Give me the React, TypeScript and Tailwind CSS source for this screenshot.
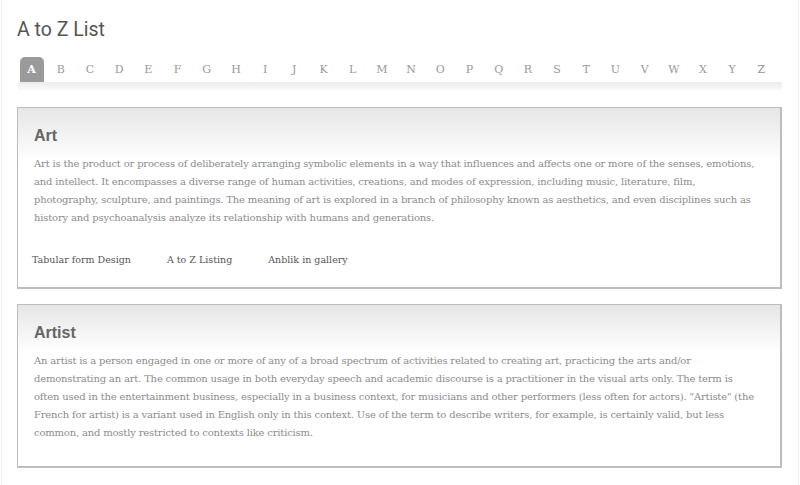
const letters = "ABCDEFGHIJKLMNOPQRSTUVWXYZ".split("");

const entries = [
  {
    title: "Art",
    lines: [
      "Art is the product or process of deliberately arranging symbolic elements in a way that influences and affects one or more of the senses, emotions,",
      "and intellect. It encompasses a diverse range of human activities, creations, and modes of expression, including music, literature, film,",
      "photography, sculpture, and paintings. The meaning of art is explored in a branch of philosophy known as aesthetics, and even disciplines such as",
      "history and psychoanalysis analyze its relationship with humans and generations.",
    ],
    links: ["Tabular form Design", "A to Z Listing", "Anblik in gallery"],
  },
  {
    title: "Artist",
    lines: [
      "An artist is a person engaged in one or more of any of a broad spectrum of activities related to creating art, practicing the arts and/or",
      "demonstrating an art. The common usage in both everyday speech and academic discourse is a practitioner in the visual arts only. The term is",
      'often used in the entertainment business, especially in a business context, for musicians and other performers (less often for actors). "Artiste" (the',
      "French for artist) is a variant used in English only in this context. Use of the term to describe writers, for example, is certainly valid, but less",
      "common, and mostly restricted to contexts like criticism.",
    ],
    links: [],
  },
];

export default function App() {
  return (
    <div className="min-h-[485px] w-[800px] bg-white">
      <div className="mx-px min-h-[485px] border-x border-[#f0f0f0] pl-[15px] pr-4 pt-[18px]">
        <h1 className="font-['Roboto',sans-serif] text-[19.5px] font-normal leading-6 text-[#555]">
          A to Z List
        </h1>

        {/* letter tabs */}
        <div className="mt-[15px]">
          <div className="grid w-[759px] grid-cols-[repeat(26,1fr)]">
            {letters.map((l, i) => (
              <div key={l} className="flex justify-center">
                <span
                  className={
                    i === 0
                      ? "flex h-[25px] w-6 items-center justify-center rounded-t-[5px] bg-[#9a9a9a] pt-[2px] font-['DejaVu_Serif',serif] text-[11px] font-bold text-white"
                      : "flex h-[25px] w-6 items-center justify-center pt-[2px] font-['DejaVu_Serif',serif] text-[11px] text-[#999]"
                  }
                >
                  {l}
                </span>
              </div>
            ))}
          </div>
          <div className="ml-px h-2 bg-gradient-to-b from-[#ececec] to-[#fafafa]" />
        </div>

        <div className="mt-[17px] flex flex-col gap-[15px]">
          {entries.map((e) => (
            <div
              key={e.title}
              className="border border-r-2 border-b-2 border-[#bdbdbd] bg-gradient-to-b from-[#e6e6e6] via-white via-[30%] to-white pl-4 pr-[14px] pt-4"
            >
              <h2 className="font-['Liberation_Sans',sans-serif] text-[16px] font-bold leading-6 text-[#666]">
                {e.title}
              </h2>
              <p className="mt-[7px] font-['DejaVu_Serif',serif] text-[10px] leading-[18px] tracking-[-0.18px] text-[#8c8c8c]">
                {e.lines.map((ln) => (
                  <span key={ln} className="block whitespace-nowrap">
                    {ln}
                  </span>
                ))}
              </p>
              {e.links.length > 0 ? (
                <div className="mt-[25px] flex gap-[36px] pb-[19px] font-['DejaVu_Serif',serif] text-[9.5px] leading-4 text-[#555]">
                  {e.links.map((l) => (
                    <a key={l} className="first:-ml-[2px]">
                      {l}
                    </a>
                  ))}
                </div>
              ) : (
                <div className="h-[24px]" />
              )}
            </div>
          ))}
        </div>
      </div>
    </div>
  );
}
